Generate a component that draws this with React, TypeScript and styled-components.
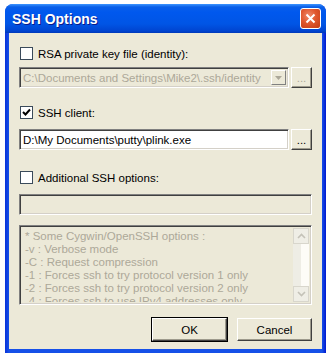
import React from 'react';
import styled, { createGlobalStyle } from 'styled-components';

const GlobalStyle = createGlobalStyle`
  html, body {
    margin: 0;
    padding: 0;
    background: #ffffff;
  }
  body {
    font-family: 'Liberation Sans', Arial, sans-serif;
    font-size: 11px;
  }
`;

const Page = styled.div`
  padding: 4px 0 0 5px;
  width: 332px;
  height: 359px;
  box-sizing: border-box;
`;

const Window = styled.div`
  width: 321px;
  height: 349px;
  border-radius: 8px 8px 0 0;
  background: linear-gradient(to right, #0831d9 0, #1650e8 4px, #1650e8 calc(100% - 4px), #0019cf 100%);
  display: flex;
  flex-direction: column;
  overflow: hidden;
  box-sizing: border-box;
`;

const TitleBar = styled.div`
  height: 29px;
  flex: none;
  display: flex;
  align-items: center;
  justify-content: space-between;
  padding: 0 5px 0 7px;
  background: linear-gradient(
    to bottom,
    #3d95ff 0,
    #0a5fe8 3px,
    #0058ee 8px,
    #0055e5 20px,
    #0044d0 27px,
    #0039b9 29px
  );
`;

const Title = styled.span`
  color: #ffffff;
  font-family: 'Liberation Sans', Arial, sans-serif;
  font-weight: bold;
  font-size: 14px;
  text-shadow: 1px 1px 0 #0a1a8a;
`;

const CloseButton = styled.div`
  width: 21px;
  height: 21px;
  box-sizing: border-box;
  border: 1px solid #ffffff;
  border-radius: 3px;
  background: radial-gradient(circle at 40% 35%, #f08a6a 0, #e0582f 45%, #c23a12 100%);
  display: flex;
  align-items: center;
  justify-content: center;
`;

const Body = styled.div`
  flex: 1;
  margin: 0 4px 4px 4px;
  background: #ece9d8;
  padding: 14px 10px 0 10px;
  display: flex;
  flex-direction: column;
`;

const CheckRow = styled.label<{ $mt?: number }>`
  display: flex;
  align-items: center;
  gap: 5px;
  height: 13px;
  margin-left: 1px;
  margin-top: ${(p) => p.$mt ?? 0}px;
  color: #000000;
  font-size: 11.5px;
`;

const Box = styled.span`
  width: 13px;
  height: 13px;
  box-sizing: border-box;
  border: 1px solid #3a4a5a;
  background: #ffffff;
  display: flex;
  align-items: center;
  justify-content: center;
  flex: none;
`;

const FieldRow = styled.div<{ $mt: number }>`
  display: flex;
  gap: 2px;
  margin-top: ${(p) => p.$mt}px;
  height: 21px;
`;

const Field = styled.div<{ $disabled?: boolean }>`
  flex: 1;
  box-sizing: border-box;
  border-top: 1px solid #808080;
  border-left: 1px solid #808080;
  border-right: 1px solid #ffffff;
  border-bottom: 1px solid #ffffff;
  box-shadow: inset 1px 1px 0 #404040, inset -1px -1px 0 #d4d0c8;
  background: ${(p) => (p.$disabled ? '#ece9d8' : '#ffffff')};
  color: ${(p) => (p.$disabled ? '#aca899' : '#000000')};
  font-size: 11.5px;
  display: flex;
  align-items: center;
  padding-left: 3px;
  white-space: nowrap;
  overflow: hidden;
  position: relative;
`;

const DropArrow = styled.div`
  position: absolute;
  right: 2px;
  top: 2px;
  bottom: 2px;
  width: 15px;
  box-sizing: border-box;
  background: #ece9d8;
  border-top: 1px solid #ffffff;
  border-left: 1px solid #ffffff;
  border-right: 1px solid #808080;
  border-bottom: 1px solid #808080;
  display: flex;
  align-items: center;
  justify-content: center;
`;

const Button = styled.button<{ $default?: boolean; $w: number; $disabled?: boolean }>`
  width: ${(p) => p.$w}px;
  height: ${(p) => (p.$default !== undefined ? 23 : 21)}px;
  box-sizing: border-box;
  padding: 0;
  font-family: 'Liberation Sans', Arial, sans-serif;
  font-size: 11.5px;
  color: ${(p) => (p.$disabled ? '#aca899' : '#000000')};
  background: #ece9d8;
  border-top: 1px solid #ffffff;
  border-left: 1px solid #ffffff;
  border-right: 1px solid #404040;
  border-bottom: 1px solid #404040;
  box-shadow: inset -1px -1px 0 #9d9a8c;
  outline: ${(p) => (p.$default ? '1px solid #000000' : 'none')};
  outline-offset: 0;
  flex: none;
`;

const OptionsBox = styled.div`
  margin-top: 10px;
  height: 80px;
  box-sizing: border-box;
  border-top: 1px solid #808080;
  border-left: 1px solid #808080;
  border-right: 1px solid #ffffff;
  border-bottom: 1px solid #ffffff;
  box-shadow: inset 1px 1px 0 #404040, inset -1px -1px 0 #d4d0c8;
  display: flex;
  overflow: hidden;
  padding: 2px;
`;

const OptionsText = styled.div`
  flex: 1;
  color: #aca899;
  font-size: 11.5px;
  line-height: 13px;
  padding: 2px 0 0 3px;
  white-space: nowrap;
  overflow: hidden;
`;

const ScrollBar = styled.div`
  width: 16px;
  flex: none;
  display: flex;
  flex-direction: column;
  justify-content: space-between;
  background: linear-gradient(to right, #eeede5 0, #eeede5 8px, #fdfcf7 8px);
`;

const ScrollArrow = styled.div`
  height: 16px;
  box-sizing: border-box;
  border: 1px solid #d8d6cc;
  background: #efeee6;
  display: flex;
  align-items: center;
  justify-content: center;
`;

const Footer = styled.div`
  margin-top: 13px;
  display: flex;
  justify-content: flex-end;
  gap: 10px;
`;

const options = [
  '* Some Cygwin/OpenSSH options :',
  '-v : Verbose mode',
  '-C : Request compression',
  '-1 : Forces ssh to try protocol version 1 only',
  '-2 : Forces ssh to try protocol version 2 only',
  '-4 : Forces ssh to use IPv4 addresses only',
];

const Chevron = ({ up }: { up?: boolean }) => (
  <svg width="9" height="6" viewBox="0 0 9 6">
    <path
      d={up ? 'M1 5 L4.5 1.5 L8 5' : 'M1 1 L4.5 4.5 L8 1'}
      fill="none"
      stroke="#c4c2b8"
      strokeWidth="1.6"
    />
  </svg>
);

const App = () => {
  return (
    <Page>
      <GlobalStyle />
      <Window>
        <TitleBar>
          <Title>SSH Options</Title>
          <CloseButton>
            <svg width="11" height="11" viewBox="0 0 11 11">
              <path d="M1.5 1.5 L9.5 9.5 M9.5 1.5 L1.5 9.5" stroke="#ffffff" strokeWidth="2" />
            </svg>
          </CloseButton>
        </TitleBar>
        <Body>
          <CheckRow>
            <Box />
            RSA private key file (identity):
          </CheckRow>
          <FieldRow $mt={7}>
            <Field $disabled>
              C:\Documents and Settings\Mike2\.ssh/identity
              <DropArrow>
                <svg width="7" height="4" viewBox="0 0 7 4">
                  <path d="M0 0 H7 L3.5 4 Z" fill="#aca899" />
                </svg>
              </DropArrow>
            </Field>
            <Button $w={21} $disabled>
              ...
            </Button>
          </FieldRow>
          <CheckRow $mt={18}>
            <Box>
              <svg width="9" height="9" viewBox="0 0 9 9">
                <path d="M1 4 L3.5 6.5 L8 1.5" fill="none" stroke="#000000" strokeWidth="2" />
              </svg>
            </Box>
            SSH client:
          </CheckRow>
          <FieldRow $mt={10}>
            <Field>D:\My Documents\putty\plink.exe</Field>
            <Button $w={21}>...</Button>
          </FieldRow>
          <CheckRow $mt={21}>
            <Box />
            Additional SSH options:
          </CheckRow>
          <FieldRow $mt={10}>
            <Field $disabled />
          </FieldRow>
          <OptionsBox>
            <OptionsText>
              {options.map((line) => (
                <div key={line}>{line}</div>
              ))}
            </OptionsText>
            <ScrollBar>
              <ScrollArrow>
                <Chevron up />
              </ScrollArrow>
              <ScrollArrow>
                <Chevron />
              </ScrollArrow>
            </ScrollBar>
          </OptionsBox>
          <Footer>
            <Button $w={75} $default>
              OK
            </Button>
            <Button $w={75} $default={false}>
              Cancel
            </Button>
          </Footer>
        </Body>
      </Window>
    </Page>
  );
};

export default App;
